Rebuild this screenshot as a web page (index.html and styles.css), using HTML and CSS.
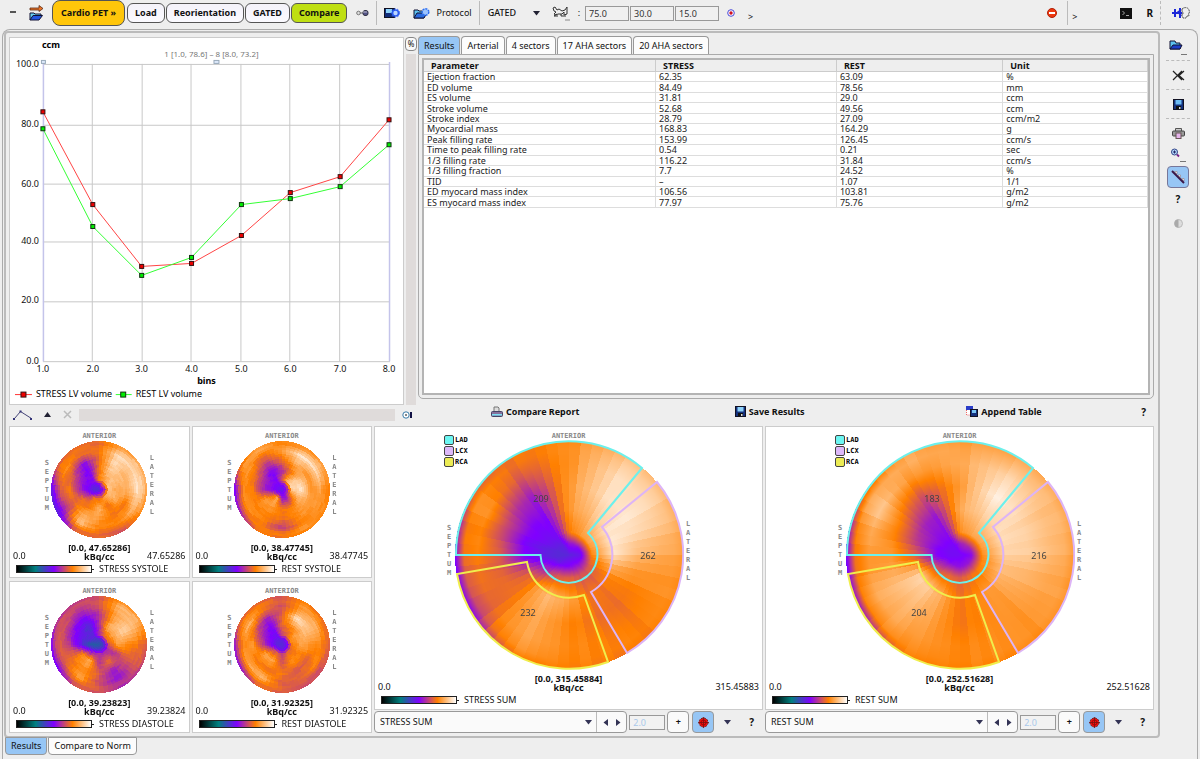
FILE: index.html
```html
<!DOCTYPE html>
<html lang="en">
<head>
<meta charset="utf-8">
<title>Cardio PET</title>
<link rel="stylesheet" href="styles.css">
</head>
<body>
<header class="toolbar">
  <span class="dash"></span>
  <button class="icon-btn after-dash" aria-label="Open study">
    <svg width="16" height="16" viewBox="0 0 16 16"><path d="M1 3h9V.5l4 3-4 3V5H1z" fill="#e8742a" stroke="#5a2a10" stroke-width=".8"/><path d="M1 15V8h4l1 1h6v2" fill="#6bd0f0" stroke="#113" /><path d="M1 15l3-4.500h9.500L10 15z" fill="#2456e0" stroke="#113"/></svg>
  </button>
  <nav class="steps">
    <button class="step module">Cardio PET »</button>
    <button class="step">Load</button>
    <button class="step">Reorientation</button>
    <button class="step">GATED</button>
    <button class="step current">Compare</button>
  </nav>
  <svg class="link-icon" width="13" height="8" viewBox="0 0 13 8"><circle cx="2.500" cy="4" r="1.800" fill="#ddd" stroke="#777"/><path d="M4 4h4" stroke="#666"/><rect x="7" y="1.500" width="5" height="5" rx="2" fill="#558" stroke="#334"/><path d="M7 3h4" stroke="#bbc"/></svg>
  <span class="sep"></span>
  <button class="icon-btn" aria-label="Save protocol">
    <svg width="16" height="12" viewBox="0 0 16 12"><rect x=".5" y="1.500" width="10" height="9" fill="#112c78" stroke="#112"/><rect x="2" y="2" width="6" height="4" fill="#8ed2fa"/><circle cx="11.500" cy="6" r="3" fill="#bcd6ff" stroke="#2b5cf0" stroke-width="1.600"/><circle cx="11.500" cy="6" r="4.200" fill="none" stroke="#2b5cf0" stroke-dasharray="1.500 1.500"/></svg>
  </button>
  <button class="protocol">
    <svg width="17" height="12" viewBox="0 0 17 12"><path d="M1 11V3h4l1 1h5v7z" fill="#5cc0ee" stroke="#113"/><path d="M1 11l3-5h10l-3 5z" fill="#2a6be0" stroke="#113"/><circle cx="12.500" cy="5" r="3.300" fill="#9cc4ff" stroke="#2b6cf0" stroke-width="1.500" stroke-dasharray="2 1"/></svg>
    Protocol
  </button>
  <span class="sep"></span>
  <span class="mode"><select aria-label="Mode"><option>GATED</option></select><svg width="7" height="5" viewBox="0 0 7 5"><path d="M0 0h7L3.500 4.500z" fill="#223"/></svg></span>
  <label class="angles"><svg width="18" height="16" viewBox="0 0 18 16"><path d="M1 3l2-1 2 3 2-1 3 2 3-1 2-3v7l-3 1v-3l-2 2H6L4 10l-2-1 2-2-2-1zM5 9l-3 2h4M9 9v2h5" fill="none" stroke="#333"/><path d="M13 15h5" stroke="#888"/></svg><span>:</span></label>
  <span class="fields">
    <input type="text" value="75.0" aria-label="Angle one"><input type="text" value="30.0" aria-label="Angle two"><input type="text" value="15.0" aria-label="Angle three">
  </span>
  <svg class="target" width="8" height="8" viewBox="0 0 8 8"><circle cx="4" cy="4" r="3.300" fill="#fff" stroke="#4848d8"/><circle cx="4" cy="4" r="1.700" fill="#d01020"/></svg>
  <span class="more">&gt;</span>
  <span class="grow"></span>
  <svg width="10" height="10" viewBox="0 0 10 10"><circle cx="5" cy="5" r="4.500" fill="#ee3910" stroke="#b02008"/><rect x="2" y="4" width="6" height="2" fill="#fff"/></svg>
  <span class="sep stop"></span>
  <span class="more close">&gt;</span>
  <svg class="term" width="12" height="11" viewBox="0 0 12 11"><rect width="12" height="11" fill="#111"/><path d="M2.500 3l2 2-2 2M6 7.500h3" fill="none" stroke="#ccc" stroke-width=".8"/></svg>
  <button class="plain-r">R</button>
  <span class="sep dotted"></span>
  <svg class="brand" width="18" height="13" viewBox="0 0 18 13"><path d="M0 6h10M3 2v8M6 4l3 5M8 1v10" stroke="#1d28d8" stroke-width="2"/><path d="M10 2c2-2 6-2 7 1l.5 2-1 2 .5 2h-2l-1 2h-3L10 9V7h1V5h-1z" fill="#eee" stroke="#555" stroke-dasharray="2 .6"/></svg>
</header>

<main class="frame">
  <div class="work">
    <section class="compare">
      <div class="top">
        <div class="chart-side">
          <div class="chart-row">
            <div class="chart">
              <svg viewBox="0 0 394 367" role="img" aria-label="LV volume per bin">
                <path d="M33 26.500h348M33 87.500h347M33 146.500h347M33 204.500h347M33 264.500h347M33 324.500h348M82.500 26v298M132.500 26v298M181.500 26v298M231.500 26v298M280.500 26v298M330.500 26v298" stroke="#c8c8c8"/>
                <path d="M33.500 24v300M380.500 24v300" stroke="#c4c4ea" stroke-width="1.500"/>
                <g fill="#dce8fa" stroke="#9ab"><rect x="31.500" y="22.500" width="4" height="3"/><rect x="204.500" y="22.500" width="5" height="3"/></g>
                <polyline points="33,74 83,167 132,229 182,226 232,198 281,155 331,139 380,82" fill="none" stroke="#f44"/>
                <polyline points="33,91 83,189 132,238 182,220 232,167 281,161 331,149 380,107" fill="none" stroke="#3f3"/>
                <g fill="#e00" stroke="#311"><rect x="31" y="72" width="4" height="4"/><rect x="81" y="165" width="4" height="4"/><rect x="130" y="227" width="4" height="4"/><rect x="180" y="224" width="4" height="4"/><rect x="230" y="196" width="4" height="4"/><rect x="279" y="153" width="4" height="4"/><rect x="329" y="137" width="4" height="4"/><rect x="378" y="80" width="4" height="4"/></g>
                <g fill="#0e0" stroke="#131"><rect x="31" y="89" width="4" height="4"/><rect x="81" y="187" width="4" height="4"/><rect x="130" y="236" width="4" height="4"/><rect x="180" y="218" width="4" height="4"/><rect x="230" y="165" width="4" height="4"/><rect x="279" y="159" width="4" height="4"/><rect x="329" y="147" width="4" height="4"/><rect x="378" y="105" width="4" height="4"/></g>
                <g class="axis end"><text x="29" y="29">100.0</text><text x="29" y="89">80.0</text><text x="29" y="149">60.0</text><text x="29" y="207">40.0</text><text x="29" y="266">20.0</text><text x="29" y="327">0.0</text></g>
                <g class="axis mid"><text x="33" y="335">1.0</text><text x="83" y="335">2.0</text><text x="132" y="335">3.0</text><text x="182" y="335">4.0</text><text x="232" y="335">5.0</text><text x="281" y="335">6.0</text><text x="331" y="335">7.0</text><text x="380" y="335">8.0</text></g>
                <text class="axis-name" x="41" y="10">ccm</text>
                <text class="axis-name" x="197" y="347">bins</text>
                <text class="range-note" x="202" y="19">1 [1.0, 78.6] – 8 [8.0, 73.2]</text>
                <path d="M5 357.500h17" stroke="#f33"/><rect x="11" y="355" width="5" height="5" fill="#e00" stroke="#311"/><text class="key" x="26" y="360">STRESS LV volume</text>
                <path d="M106 357.500h16" stroke="#3f3"/><rect x="111" y="355" width="5" height="5" fill="#0e0" stroke="#131"/><text class="key" x="126" y="360">REST LV volume</text>
              </svg>
            </div>
            <div class="zoom-bar"><button>%</button><span></span></div>
          </div>
          <div class="chart-tools">
            <svg width="20" height="12" viewBox="0 0 20 12"><path d="M1.500 9.500l6-7 11 7" fill="none" stroke="#447"/><path d="M0 9h2v2H0zM6.500 1.500h2v2h-2zM17 9h2v2h-2z" fill="#337"/></svg>
            <svg class="up" width="7" height="5" viewBox="0 0 7 5"><path d="M0 5h7L3.500 0z" fill="#223"/></svg>
            <svg class="x" width="9" height="9" viewBox="0 0 9 9"><path d="M1 1l7 7M8 1L1 8" stroke="#bbb" stroke-width="1.500"/></svg>
            <span class="track"></span>
            <svg class="cam" width="10" height="8" viewBox="0 0 10 8"><circle cx="4" cy="4" r="3.200" fill="#fff" stroke="#3a7ca8"/><rect x="3.500" y="3" width="1" height="2" fill="#111"/><rect x="8" y="1" width="2" height="6" fill="#114"/></svg>
          </div>
        </div>
        <div class="results-side">
          <div class="tabs" role="tablist">
            <button class="tab on" role="tab">Results</button><button class="tab" role="tab">Arterial</button><button class="tab" role="tab">4 sectors</button><button class="tab" role="tab">17 AHA sectors</button><button class="tab" role="tab">20 AHA sectors</button>
          </div>
          <div class="tab-body">
            <div class="scroll">
              <table>
                <thead><tr><th class="c1">Parameter</th><th class="c2">STRESS</th><th class="c3">REST</th><th>Unit</th></tr></thead>
                <tbody>
                  <tr><td>Ejection fraction</td><td>62.35</td><td>63.09</td><td>%</td></tr>
                  <tr><td>ED volume</td><td>84.49</td><td>78.56</td><td>mm</td></tr>
                  <tr><td>ES volume</td><td>31.81</td><td>29.0</td><td>ccm</td></tr>
                  <tr><td>Stroke volume</td><td>52.68</td><td>49.56</td><td>ccm</td></tr>
                  <tr><td>Stroke index</td><td>28.79</td><td>27.09</td><td>ccm/m2</td></tr>
                  <tr><td>Myocardial mass</td><td>168.83</td><td>164.29</td><td>g</td></tr>
                  <tr><td>Peak filling rate</td><td>153.99</td><td>126.45</td><td>ccm/s</td></tr>
                  <tr><td>Time to peak filling rate</td><td>0.54</td><td>0.21</td><td>sec</td></tr>
                  <tr><td>1/3 filling rate</td><td>116.22</td><td>31.84</td><td>ccm/s</td></tr>
                  <tr><td>1/3 filling fraction</td><td>7.7</td><td>24.52</td><td>%</td></tr>
                  <tr><td>TID</td><td>–</td><td>1.07</td><td>1/1</td></tr>
                  <tr><td>ED myocard mass index</td><td>106.56</td><td>103.81</td><td>g/m2</td></tr>
                  <tr><td>ES myocard mass index</td><td>77.97</td><td>75.76</td><td>g/m2</td></tr>
                </tbody>
              </table>
            </div>
          </div>
          <div class="actions">
            <button><svg width="12" height="12" viewBox="0 0 12 12"><path d="M3 6V1h4l1 1v4" fill="#ddd" stroke="#777"/><rect x=".5" y="5.500" width="11" height="5" rx="1" fill="#85709c" stroke="#446"/><rect x="1" y="8" width="10" height="1.500" fill="#7de0f4"/></svg>Compare Report</button>
            <button><svg width="11" height="11" viewBox="0 0 11 11"><rect x=".5" y=".5" width="10" height="10" fill="#14307c" stroke="#112"/><rect x="2.500" y="1" width="6" height="4.500" fill="#8ed2fa"/><rect x="3" y="7" width="5" height="3" fill="#111"/><rect x="6" y="8" width="1.500" height="2" fill="#ddd"/></svg>Save Results</button>
            <button class="append"><svg width="12" height="11" viewBox="0 0 12 11"><rect x=".5" y="1" width="6" height="8" fill="#fff" stroke="#e66" stroke-dasharray="1 1"/><rect width="7" height="4" fill="#2a3cc8"/><rect x="4.500" y="3.500" width="7" height="7" fill="#14307c" stroke="#112"/><rect x="6" y="4" width="4" height="3" fill="#7ac4f4"/></svg>Append Table</button>
            <button class="help">?</button>
          </div>
        </div>
      </div>

      <div class="maps">
        <figure class="map small">
          <div class="anterior">ANTERIOR</div>
          <div class="polar"><span class="side">SEPTUM</span><canvas width="96" height="97" data-map="stressSystole"></canvas><span class="side">LATERAL</span></div>
          <figcaption><span>0.0</span><b>[0.0, 47.65286]<br>kBq/cc</b><span>47.65286</span></figcaption>
          <div class="scale"><i></i>STRESS SYSTOLE</div>
        </figure>
        <figure class="map small">
          <div class="anterior">ANTERIOR</div>
          <div class="polar"><span class="side">SEPTUM</span><canvas width="96" height="97" data-map="restSystole"></canvas><span class="side">LATERAL</span></div>
          <figcaption><span>0.0</span><b>[0.0, 38.47745]<br>kBq/cc</b><span>38.47745</span></figcaption>
          <div class="scale"><i></i>REST SYSTOLE</div>
        </figure>
        <figure class="map small">
          <div class="anterior">ANTERIOR</div>
          <div class="polar"><span class="side">SEPTUM</span><canvas width="96" height="97" data-map="stressDiastole"></canvas><span class="side">LATERAL</span></div>
          <figcaption><span>0.0</span><b>[0.0, 39.23823]<br>kBq/cc</b><span>39.23824</span></figcaption>
          <div class="scale"><i></i>STRESS DIASTOLE</div>
        </figure>
        <figure class="map small">
          <div class="anterior">ANTERIOR</div>
          <div class="polar"><span class="side">SEPTUM</span><canvas width="96" height="97" data-map="restDiastole"></canvas><span class="side">LATERAL</span></div>
          <figcaption><span>0.0</span><b>[0.0, 31.92325]<br>kBq/cc</b><span>31.92325</span></figcaption>
          <div class="scale"><i></i>REST DIASTOLE</div>
        </figure>

        <div class="big-cell">
          <figure class="map big">
            <ul class="vessels"><li><i class="lad"></i>LAD</li><li><i class="lcx"></i>LCX</li><li><i class="rca"></i>RCA</li></ul>
            <div class="anterior">ANTERIOR</div>
            <div class="polar"><span class="side">SEPTUM</span>
              <div class="disc"><canvas width="228" height="228" data-map="stressSum"></canvas>
                <svg viewBox="-115 -115 230 230" fill="none" stroke-width="2">
                  <path d="M-113 0A113 113 0 0 1 73 -87L19 -22A28.500 28.500 0 1 1 -28.500 0Z" stroke="#6cf0ec"/>
                  <path d="M88 -73A114 114 0 0 1 58 98L22 37A43 43 0 0 0 33 -28Z" stroke="#ddb4f6"/>
                  <path d="M39 107A114 114 0 0 1 -112 19L-42 7A43 43 0 0 0 15 40Z" stroke="#f0ee4c"/>
                  <g class="values"><text x="-28" y="-53">209</text><text x="79" y="4">262</text><text x="-41" y="61">232</text></g>
                </svg></div>
              <span class="side">LATERAL</span></div>
            <figcaption><span>0.0</span><b>[0.0, 315.45884]<br>kBq/cc</b><span>315.45883</span></figcaption>
            <div class="scale"><i></i>STRESS SUM</div>
          </figure>
          <div class="controls">
            <span class="combo"><select aria-label="Left image"><option>STRESS SUM</option></select><svg width="7" height="5" viewBox="0 0 7 5"><path d="M0 0h7L3.500 4.500z" fill="#335"/></svg><span class="nav"><button aria-label="Previous"><svg width="5" height="7" viewBox="0 0 5 7"><path d="M5 0v7L.5 3.500z" fill="#335"/></svg></button><button aria-label="Next"><svg width="5" height="7" viewBox="0 0 5 7"><path d="M0 0v7l4.500-3.500z" fill="#335"/></svg></button></span></span>
            <input type="text" value="2.0" disabled aria-label="Left zoom">
            <button class="sq">+</button>
            <button class="sq lit" aria-label="Show segments"><svg width="11" height="11" viewBox="0 0 11 11"><circle cx="5.500" cy="5.500" r="4.500" fill="#e11" stroke="#622" stroke-dasharray="2 1"/><circle cx="5.500" cy="5.500" r="2.500" fill="none" stroke="#900" stroke-width=".8"/><path d="M0 5.500h11M5.500 0v11" stroke="#711" stroke-width=".8"/></svg></button>
            <svg class="drop" width="7" height="5" viewBox="0 0 7 5"><path d="M0 0h7L3.500 4.500z" fill="#335"/></svg>
            <button class="help">?</button>
          </div>
        </div>
        <div class="big-cell">
          <figure class="map big">
            <ul class="vessels"><li><i class="lad"></i>LAD</li><li><i class="lcx"></i>LCX</li><li><i class="rca"></i>RCA</li></ul>
            <div class="anterior">ANTERIOR</div>
            <div class="polar"><span class="side">SEPTUM</span>
              <div class="disc"><canvas width="228" height="228" data-map="restSum"></canvas>
                <svg viewBox="-115 -115 230 230" fill="none" stroke-width="2">
                  <path d="M-113 0A113 113 0 0 1 73 -87L19 -22A28.500 28.500 0 1 1 -28.500 0Z" stroke="#6cf0ec"/>
                  <path d="M88 -73A114 114 0 0 1 58 98L22 37A43 43 0 0 0 33 -28Z" stroke="#ddb4f6"/>
                  <path d="M39 107A114 114 0 0 1 -112 19L-42 7A43 43 0 0 0 15 40Z" stroke="#f0ee4c"/>
                  <g class="values"><text x="-28" y="-53">183</text><text x="79" y="4">216</text><text x="-41" y="61">204</text></g>
                </svg></div>
              <span class="side">LATERAL</span></div>
            <figcaption><span>0.0</span><b>[0.0, 252.51628]<br>kBq/cc</b><span>252.51628</span></figcaption>
            <div class="scale"><i></i>REST SUM</div>
          </figure>
          <div class="controls">
            <span class="combo"><select aria-label="Right image"><option>REST SUM</option></select><svg width="7" height="5" viewBox="0 0 7 5"><path d="M0 0h7L3.500 4.500z" fill="#335"/></svg><span class="nav"><button aria-label="Previous"><svg width="5" height="7" viewBox="0 0 5 7"><path d="M5 0v7L.5 3.500z" fill="#335"/></svg></button><button aria-label="Next"><svg width="5" height="7" viewBox="0 0 5 7"><path d="M0 0v7l4.500-3.500z" fill="#335"/></svg></button></span></span>
            <input type="text" value="2.0" disabled aria-label="Right zoom">
            <button class="sq">+</button>
            <button class="sq lit" aria-label="Show segments"><svg width="11" height="11" viewBox="0 0 11 11"><circle cx="5.500" cy="5.500" r="4.500" fill="#e11" stroke="#622" stroke-dasharray="2 1"/><circle cx="5.500" cy="5.500" r="2.500" fill="none" stroke="#900" stroke-width=".8"/><path d="M0 5.500h11M5.500 0v11" stroke="#711" stroke-width=".8"/></svg></button>
            <svg class="drop" width="7" height="5" viewBox="0 0 7 5"><path d="M0 0h7L3.500 4.500z" fill="#335"/></svg>
            <button class="help">?</button>
          </div>
        </div>
      </div>
    </section>
    <div class="tabs bottom" role="tablist"><button class="tab on" role="tab">Results</button><button class="tab" role="tab">Compare to Norm</button></div>
  </div>

  <aside class="side-tools">
    <button aria-label="Open"><svg width="18" height="18" viewBox="0 0 18 18"><path d="M1 12V4h5l1 2h4v6z" fill="#5cc0ee" stroke="#113"/><path d="M1 12l3-4h9l-2 4z" fill="#1c3cc8" stroke="#113"/><path d="M12 17.500h6" stroke="#777"/></svg></button>
    <hr>
    <button aria-label="Close"><svg width="13" height="11" viewBox="0 0 13 11"><path d="M1 1l9 9M10 1L1 10M12 1L7 5.500 12 10" fill="none" stroke="#222" stroke-width="1.200"/></svg></button>
    <hr>
    <button aria-label="Save"><svg width="11" height="11" viewBox="0 0 11 11"><rect x=".5" y=".5" width="10" height="10" fill="#14307c" stroke="#112"/><rect x="2.500" y="1" width="6" height="4.500" fill="#6cbcf4"/><rect x="3" y="7" width="5" height="3" fill="#111"/><rect x="6" y="8" width="1.500" height="2" fill="#ddd"/></svg></button>
    <hr>
    <button aria-label="Print"><svg width="13" height="11" viewBox="0 0 13 11"><path d="M3.500 4V.5h6V4" fill="#ccc" stroke="#555"/><rect x=".5" y="3" width="12" height="5" rx="1" fill="#999" stroke="#444"/><rect x="4" y="5" width="5" height="5.500" fill="#e4b4ea" stroke="#655"/></svg></button>
    <button class="find" aria-label="Zoom"><svg width="16" height="14" viewBox="0 0 16 14"><circle cx="4.500" cy="4" r="3" fill="#b4dcfc" stroke="#348"/><path d="M3 4h3M4.500 2.500v3" stroke="#226"/><path d="M7 6.500l2 2" stroke="#728" stroke-width="1.800"/><path d="M10 13.500h6" stroke="#777"/></svg></button>
    <button class="ruler" aria-label="Curve"><svg width="14" height="14" viewBox="0 0 14 14"><path d="M1 1l12 12" stroke="#3b1848" stroke-width="2"/><path d="M3.500 1.500h2.500v2.500zM7 5h2.500v2.500zM10.500 8.500h2.500v2.500z" fill="#fff" stroke="#866" stroke-width=".5"/></svg></button>
    <button class="help">?</button>
    <button class="tone" aria-label="Contrast"><svg width="9" height="9" viewBox="0 0 9 9"><circle cx="4.500" cy="4.500" r="4" fill="#ddd" stroke="#bbb"/><path d="M4.500.5a4 4 0 0 0 0 8z" fill="#aaa"/></svg></button>
  </aside>
</main>
<script src="maps.js"></script>
</body>
</html>
```
FILE: styles.css
```css
* { box-sizing: border-box; }
body { margin: 0; min-height: 100vh; display: flex; flex-direction: column; background: #eee; color: #111; font-family: "Noto Sans", "Open Sans", sans-serif; font-size: 9px; line-height: 12px; }
button, input, select { font: inherit; color: inherit; margin: 0; }
button { padding: 0; border: 0; background: none; }
svg { flex: none; display: block; }

.toolbar { display: flex; align-items: center; height: 26px; padding: 0 10px 0 10px; }
.dash { width: 6px; height: 2px; background: #555; margin-top: -3px; }
.after-dash { margin-left: 13px; }
.steps { display: flex; align-items: center; gap: 1px; margin-left: 7px; }
.step { height: 20px; padding: 0 7px; border: 1px solid #555; border-radius: 6px; background: linear-gradient(#f4f2fa, #fbfaff); font-weight: 700; }
.step.module { height: 26px; padding: 0 8px; margin-right: 1px; background: #ffc60a; border-radius: 8px; }
.step.current { background: #bfdf12; }
.link-icon { margin-left: 9px; }
.sep { width: 1px; height: 24px; margin: 0 7px; background: #bbb; }
.sep.stop { margin-left: 10px; margin-right: 4px; }
.protocol { display: flex; align-items: center; gap: 6px; margin-left: 13px; }
.mode { display: flex; align-items: center; }
.mode select { appearance: none; border: 0; background: none; padding: 0 0 0 1px; width: 46px; font-weight: 500; }
.angles { display: flex; align-items: center; gap: 8px; margin-left: 12px; }
.fields { display: flex; gap: 1px; margin-left: 5px; }
.fields input { width: 44px; height: 15px; padding: 0 3px; border: 1px solid #999; background: #f0f0f0; color: #333; }
.target { margin-left: 8px; }
.more { margin-left: 13px; padding-top: 8px; }
.close { margin-left: 0; }
.grow { flex: 1; }
.term { margin-left: 43px; }
.plain-r { margin-left: 14px; font-weight: 700; font-size: 10px; }
.sep.dotted { background: none; border-left: 1px dashed #bbb; margin-right: 11px; }

.frame { flex: 1; display: flex; margin: 3px 2px 0; padding: 1px 1px 0; border: 1px solid #aaa; border-bottom: 0; border-radius: 8px 8px 0 0; }
.work { flex: 1; min-width: 0; display: flex; flex-direction: column; }
.compare { border: 2px solid #bbb; border-radius: 4px; padding: 3px 4px 3px 3px; display: flex; flex-direction: column; gap: 2px; }
.top { display: flex; }
.chart-side { flex: 409 1 0; min-width: 0; }
.chart-row { display: flex; }
.chart { flex: 1; min-width: 0; margin-top: 1px; background: #fff; border: 1px solid #ccc; }
.chart svg { width: 100%; height: auto; }
.axis text { font-size: 9px; fill: #111; }
.end text { text-anchor: end; }
.mid text { text-anchor: middle; }
.axis-name { font-size: 9px; font-weight: 700; text-anchor: middle; }
.range-note { font-size: 8px; fill: #777; text-anchor: middle; }
.key { font-size: 9px; }
.zoom-bar { width: 14px; display: flex; flex-direction: column; align-items: center; gap: 3px; padding-top: 1px; }
.zoom-bar button { width: 12px; height: 14px; border: 1px solid #888; border-radius: 4px; background: #fafafa; font-size: 8px; line-height: 8px; }
.zoom-bar span { flex: 1; width: 10px; background: #dfdbda; }
.chart-tools { display: flex; align-items: center; height: 19px; padding-left: 4px; }
.up { margin-left: 11px; }
.x { margin-left: 12px; }
.track { flex: 1; height: 12px; margin: 0 7px; background: #dfdbda; }
.cam { margin-right: 6px; }

.results-side { flex: 736 1 0; min-width: 0; display: flex; flex-direction: column; }
.tabs { display: flex; gap: 1px; }
.tab { height: 18px; padding: 0 5px; border: 1px solid #999; border-bottom: 0; border-radius: 4px 4px 0 0; background: #fcfcfc; }
.tab.on { background: #97c6f5; }
.tab-body { flex: 1; display: flex; padding: 3px; border: 1px solid #aaa; border-radius: 0 0 5px 5px; }
.scroll { flex: 1; background: #fff; border: 2px solid #b4b4b4; }
table { width: 100%; height: 148px; border-collapse: collapse; table-layout: fixed; }
th, td { padding: 0 0 0 3px; text-align: left; line-height: 9px; border-right: 1px solid #ddd; border-bottom: 1px solid #ddd; }
th { padding: 0 7px; line-height: 11px; background: #eee; border-color: #ccc; }
td { color: #222; }
.c1 { width: 32%; }
.c2 { width: 25%; }
.c3 { width: 23%; }
.actions { display: flex; align-items: center; height: 25px; padding-right: 8px; }
.actions button { flex: 1; display: flex; align-items: center; justify-content: center; gap: 3px; font-weight: 700; }
.actions .append { padding-right: 20px; }
.actions .help, .help { flex: none; font-weight: 700; font-size: 10px; }

.maps { display: grid; grid-template: auto auto / 181fr 181fr 390fr 390fr; gap: 3px 2px; }
.map { margin: 0; padding-top: 4px; background: #fff; border: 1px solid #ccc; position: relative; }
.map:nth-of-type(3) { grid-area: 2 / 1; }
.map:nth-of-type(4) { grid-area: 2 / 2; }
.big-cell { grid-row: 1 / 3; display: flex; flex-direction: column; gap: 1px; min-width: 0; }
.big-cell:nth-last-child(2) { grid-column: 3; }
.big-cell:last-child { grid-column: 4; }
.big { grid-area: auto; flex: 1; }
.anterior, .side, .vessels { font-family: "DejaVu Sans Mono", monospace; font-size: 7px; font-weight: 700; color: #888; }
.anterior { text-align: center; line-height: 10px; }
.polar { display: flex; justify-content: center; align-items: center; gap: 2px; }
.big .polar { gap: 3px; }
.side { width: 5px; line-height: 9px; text-align: center; word-break: break-all; padding-bottom: 8px; }
canvas { display: block; }
.disc { position: relative; }
.disc svg { position: absolute; inset: -1px; width: 230px; height: 230px; }
.values text { fill: #444; stroke: none; font-size: 9px; text-anchor: middle; }
figcaption { display: grid; grid-template-columns: 1fr auto 1fr; align-items: end; padding: 5px 3px 0; line-height: 10px; }
figcaption b { text-align: center; line-height: 9px; }
figcaption span:last-child { text-align: right; }
.scale { display: flex; align-items: center; gap: 7px; padding-left: 6px; height: 16px; line-height: 12px; }
.scale i { position: relative; width: 76px; height: 8px; border: 1px solid #222; background: linear-gradient(90deg, #000, #008080 25%, #8000ff 50%, #ff8000 75%, #fff); }
.scale i::after { content: ""; position: absolute; right: -3px; top: 3px; width: 3px; height: 1px; background: #222; }
.vessels { position: absolute; left: 69px; top: 7px; margin: 0; padding: 0; list-style: none; color: #000; }
.vessels li { display: flex; align-items: center; gap: 1px; height: 11px; }
.vessels i { width: 10px; height: 10px; border: 1px solid #444; border-radius: 2px; }
.lad { background: #6cf6f2; }
.lcx { background: #ddb8fa; }
.rca { background: #ecec54; }

.controls { display: flex; align-items: center; height: 22px; }
.combo { flex: 1; display: flex; align-items: center; height: 22px; border: 1px solid #999; border-radius: 4px; background: #fafafa; }
.combo select { flex: 1; min-width: 0; appearance: none; border: 0; background: none; padding: 0 5px; }
.nav { display: flex; align-items: center; gap: 8px; height: 20px; margin-left: 4px; padding: 0 5px 0 6px; border-left: 1px solid #bbb; }
.controls input { width: 36px; height: 15px; margin: 0 2px; padding: 0 3px; border: 1px solid #999; background: #f2f2f2; color: #a9c8ea; }
.sq { width: 22px; height: 22px; margin-right: 3px; display: flex; align-items: center; justify-content: center; border: 1px solid #999; border-radius: 4px; background: #fafafa; font-weight: 700; }
.lit { background: #97c6f5; }
.drop { margin-left: 7px; }
.controls .help { margin: 0 9px 0 18px; }

.bottom .tab { height: 18px; border: 1px solid #999; border-radius: 0 0 4px 4px; }
.bottom { padding-left: 1px; margin-top: -1px; }

.side-tools { width: 36px; display: flex; flex-direction: column; align-items: center; padding-top: 6px; }
.side-tools hr { width: 24px; margin: 5px 0; border: 0; border-top: 1px dashed #bbb; }
.side-tools button { display: flex; justify-content: center; align-items: center; min-height: 18px; }
.side-tools .find { margin-top: 4px; }
.side-tools .ruler { width: 22px; height: 22px; margin: 2px 0; border: 1px solid #779; border-radius: 4px; background: #97c6f5; }
.side-tools .tone { margin-top: 6px; }
```
FILE: maps.js
```js
// Uptake samples: one row per 30 degrees clockwise from anterior, one column per radius in RADII.
const RADII = [0, 0.1, 0.2, 0.4, 0.6, 0.8, 0.92, 1];
const MAPS = {
  stressSystole: { bins: 60, rings: 22, noise: 0.03, rows: [
    [42,48,76,72,72,72,70,72],[42,60,80,88,92,93,85,78],[42,60,88,88,85,90,90,82],[42,50,88,82,86,95,90,80],
    [42,60,85,85,73,85,80,76],[42,55,80,71,74,76,68,66],[42,58,72,85,80,74,70,72],[42,50,74,72,85,88,73,68],
    [42,45,54,72,70,58,48,41],[42,42,47,58,74,68,53,43],[42,43,49,54,66,78,74,68],[42,47,52,49,50,72,72,70]] },
  restSystole: { bins: 60, rings: 22, noise: 0.03, rows: [
    [45,52,66,58,72,80,76,76],[45,52,85,74,84,95,82,76],[45,56,92,90,78,92,86,80],[45,52,90,95,80,82,76,74],
    [45,56,75,85,82,78,78,76],[45,52,56,74,78,75,80,76],[45,50,56,73,72,60,74,72],[45,52,85,80,76,74,76,72],
    [45,50,66,80,76,78,68,53],[45,48,51,58,74,77,58,47],[45,48,51,57,70,80,80,72],[45,49,50,49,60,72,82,80]] },
  stressDiastole: { bins: 60, rings: 22, noise: 0.03, rows: [
    [33,40,58,58,60,66,66,66],[33,40,70,85,80,84,86,76],[33,40,73,86,92,86,86,80],[33,38,66,82,78,74,70,68],
    [33,40,58,60,68,66,68,60],[33,42,58,72,56,53,60,58],[33,40,60,60,68,63,68,66],[33,38,58,84,78,82,70,66],
    [33,34,46,76,74,68,57,47],[33,32,32,46,60,68,62,49],[33,36,42,45,53,66,66,60],[33,38,44,40,48,60,64,60]] },
  restDiastole: { bins: 60, rings: 22, noise: 0.03, rows: [
    [42,45,64,70,70,64,68,66],[42,46,70,76,94,80,80,74],[42,48,78,84,88,84,76,70],[42,46,74,82,80,76,72,68],
    [42,46,70,76,70,76,66,66],[42,46,70,78,68,70,66,66],[42,44,62,66,74,66,70,68],[42,45,70,82,72,86,74,70],
    [42,44,62,82,74,82,66,50],[42,43,48,62,80,76,64,53],[42,43,48,54,66,86,76,70],[42,44,47,49,54,74,74,68]] },
  stressSum: { bins: 60, rings: 0, noise: 0.024, rows: [
    [43,54,74,80,80,78,78,77],[43,54,80,87,93,93,90,87],[43,50,82,96,96,93,90,86],[43,46,76,94,86,83,82,80],
    [43,50,67,74,73,75,76,75],[43,52,66,72,71,74,75,73],[43,51,69,82,76,77,76,75],[43,49,66,87,84,83,80,74],
    [43,44,54,71,71,69,63,49],[42,42,43,50,67,75,72,49],[43,43,46,50,62,78,78,67],[43,45,49,52,56,67,72,73]] },
  restSum: { bins: 60, rings: 0, noise: 0.02, rows: [
    [48,56,78,84,80,83,82,80],[48,58,82,90,97,92,86,82],[48,56,82,94,92,88,87,84],[48,52,78,91,90,86,84,80],
    [48,54,75,84,82,80,80,78],[48,54,72,78,78,78,78,76],[48,53,68,73,73,76,76,75],[48,53,70,86,84,81,78,75],
    [48,50,62,93,88,84,76,52],[48,48,50,68,79,79,72,47],[48,48,51,58,74,89,83,68],[48,49,52,55,65,79,84,83]] }
};
const STOPS = [[0, 0, 0], [0, 128, 128], [128, 0, 255], [255, 128, 0], [255, 255, 255]];

function color(v) {
  const p = Math.max(0, Math.min(0.999, v)) * 4;
  const i = Math.floor(p);
  return STOPS[i].map((c, k) => c + (STOPS[i + 1][k] - c) * (p - i));
}
function noise(a, b) {
  const n = Math.sin(a * 12.9898 + b * 78.233) * 43758.5453;
  return n - Math.floor(n) - 0.5;
}
function sampleRow(row, r) {
  let i = 0;
  while (i < RADII.length - 2 && r > RADII[i + 1]) i++;
  const t = Math.min(1, (r - RADII[i]) / (RADII[i + 1] - RADII[i]));
  return row[i] + (row[i + 1] - row[i]) * t;
}
function uptake(map, r, turn) {
  const bin = Math.floor(turn * map.bins);
  const a = (bin + 0.5) / map.bins * 12;
  const i = Math.floor(a) % 12;
  if (map.rings) r = (Math.floor(r * map.rings) + 0.5) / map.rings;
  const t = a - Math.floor(a);
  const v = sampleRow(map.rows[i], r) * (1 - t) + sampleRow(map.rows[(i + 1) % 12], r) * t;
  const ring = Math.floor(r * (map.rings || 8));
  const grain = map.rings ? noise(Math.floor(bin / 2), ring) : noise(bin, 1);
  return v / 100 + grain * map.noise * Math.min(1, r * 3);
}
document.querySelectorAll("canvas[data-map]").forEach((canvas) => {
  const map = MAPS[canvas.dataset.map];
  const ctx = canvas.getContext("2d");
  const { width: w, height: h } = canvas;
  const image = ctx.createImageData(w, h);
  for (let y = 0; y < h; y++) {
    for (let x = 0; x < w; x++) {
      const dx = (x + 0.5 - w / 2) / (w / 2);
      const dy = (y + 0.5 - h / 2) / (h / 2);
      const r = Math.hypot(dx, dy);
      if (r > 1) continue;
      const turn = (Math.atan2(dx, -dy) / (2 * Math.PI) + 1) % 1;
      const [red, green, blue] = color(uptake(map, r, turn));
      image.data.set([red, green, blue, 255], (y * w + x) * 4);
    }
  }
  ctx.putImageData(image, 0, 0);
});
```
